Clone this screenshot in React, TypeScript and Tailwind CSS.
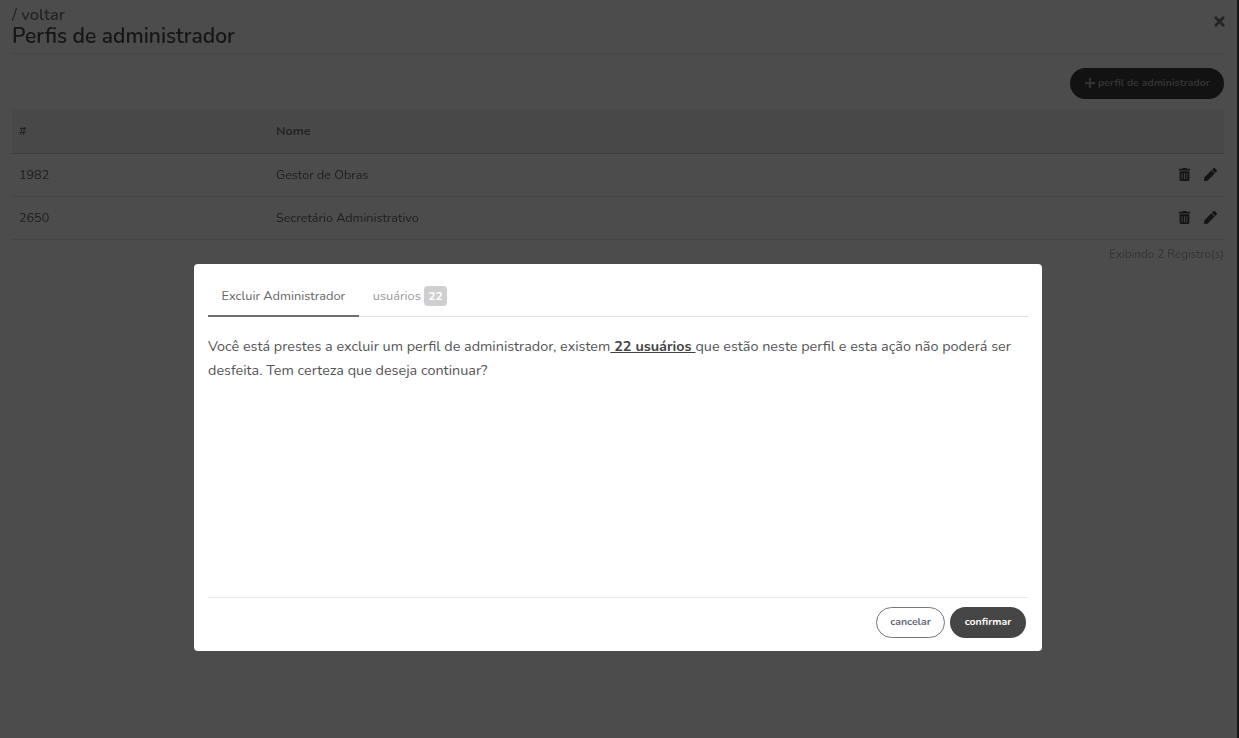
import { FaPen, FaPlus, FaTimes, FaTrashAlt } from 'react-icons/fa';

const rows = [
  { id: '1982', name: 'Gestor de Obras' },
  { id: '2650', name: 'Secretário Administrativo' },
];

function ProfilesPage() {
  return (
    <div className="h-[738px] overflow-hidden bg-white pl-3 pr-[15px] blur-[0.5px]">
      <header className="relative h-[54px] border-b border-[#e8e8e8] pt-[6px]">
        <div className="text-[16.5px] leading-[18px] font-semibold text-[#7a7a7a]">/ voltar</div>
        <h1 className="-mt-[1px] text-[21px] leading-[26px] font-semibold text-[#4a4a4a]">Perfis de administrador</h1>
        <button className="absolute -right-[3px] top-[14px] text-[#777]">
          <FaTimes className="size-[15px]" />
        </button>
      </header>

      <div className="flex justify-end pt-[14px] pb-[11px]">
        <button className="flex h-[31px] w-[154px] items-center justify-center gap-[2px] rounded-full bg-[#3d3d3d] pb-[1px] text-[10.5px] font-bold text-[#aaa]">
          <FaPlus className="size-[12px]" />
          perfil de administrador
        </button>
      </div>

      <table className="w-full border-collapse text-[12.6px] text-[#666]">
        <thead>
          <tr className="h-[43px] border-b border-[#cfcfcf] bg-[#f2f2f2] text-left">
            <th className="w-[264px] pl-[7px] pt-[1px] font-bold text-[#777]">#</th>
            <th className="pt-[1px] font-bold text-[#777]">Nome</th>
            <th />
          </tr>
        </thead>
        <tbody>
          {rows.map((row) => (
            <tr key={row.id} className="h-[43px] border-b border-[#e8e8e8]">
              <td className="pl-[7px] pt-[1px]">{row.id}</td>
              <td className="pt-[1px]">{row.name}</td>
              <td>
                <div className="flex items-center justify-end gap-[13px] pr-[7px] text-[#454545]">
                  <FaTrashAlt className="size-[13px]" />
                  <FaPen className="size-[13px]" />
                </div>
              </td>
            </tr>
          ))}
        </tbody>
      </table>
      <div className="pt-[6px] text-right text-[11.7px] leading-[16px] text-[#aaa]">Exibindo 2 Registro(s)</div>
    </div>
  );
}

function DeleteModal() {
  return (
    <div className="absolute left-[194px] top-[264px] flex h-[387px] w-[848px] flex-col rounded-[4px] bg-white px-[14px]">
      <div className="mt-[14px] flex h-[39px] border-b border-[#dedede] text-[12.8px]">
        <div className="h-[39px] border-b-2 border-[#6e6e6e] px-[13.5px] pt-[9px] text-[#666]">Excluir Administrador</div>
        <div className="flex h-[38px] items-start gap-[3px] px-[14px] pt-[9px] text-[#999]">
          usuários
          <span className="-mt-[1px] rounded-[4px] bg-[#cfcfcf] px-[4.5px] py-[1px] text-[12px] font-bold text-white">22</span>
        </div>
      </div>

      <p className="mt-[17px] text-[14.4px] leading-[24px] text-[#555]">
        Você está prestes a excluir um perfil de administrador, existem
        <b className="font-bold text-[#444] underline"> 22 usuários </b>
        que estão neste perfil e esta ação não poderá ser desfeita. Tem certeza que deseja continuar?
      </p>

      <div className="mt-auto flex h-[54px] justify-end gap-[5px] border-t border-[#e8e8e8] pt-[9px] pr-[2px]">
        <button className="h-[31px] w-[69px] rounded-full border border-[#777] pb-[1px] text-[10.5px] font-bold text-[#667]">cancelar</button>
        <button className="h-[31px] w-[76px] rounded-full bg-[#454545] pb-[1px] text-[10.5px] font-bold text-white">confirmar</button>
      </div>
    </div>
  );
}

export default function App() {
  return (
    <div className="relative h-[738px] overflow-hidden font-['Nunito','Lato',sans-serif]">
      <ProfilesPage />
      <div className="absolute inset-0 bg-black/70" />
      <div className="absolute right-0 top-0 h-full w-[2px] bg-[#161616]" />
      <DeleteModal />
    </div>
  );
}
